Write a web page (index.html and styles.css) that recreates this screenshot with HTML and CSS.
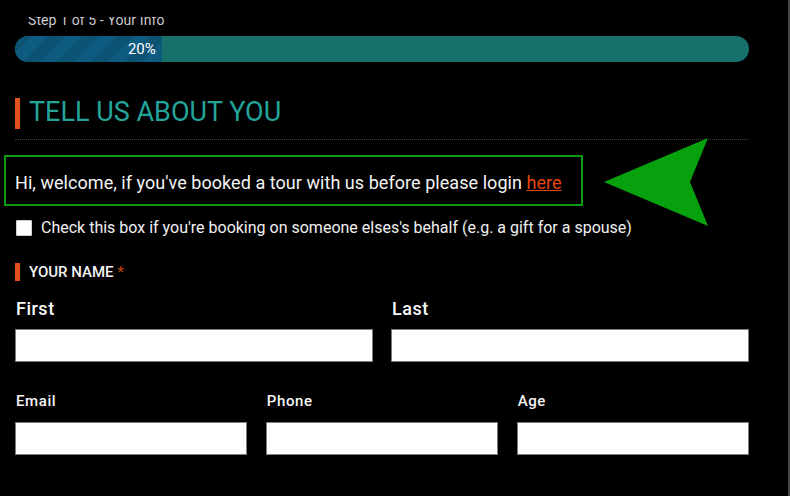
FILE: index.html
```html
<!DOCTYPE html>
<html lang="en">
<head>
<meta charset="utf-8">
<title>Your Info</title>
<link rel="stylesheet" href="styles.css">
</head>
<body>
<div class="page">
  <div class="step"><span>Step 1 of 5 - Your Info</span></div>
  <div class="progress">
    <div class="progress-fill" style="width: 20%;">20%</div>
  </div>

  <h2 class="section-title">TELL US ABOUT YOU</h2>
  <div class="divider"></div>

  <p class="welcome">Hi, welcome, if you've booked a tour with us before please login <a href="#" class="login-link">here</a></p>

  <svg class="pointer" width="112" height="96" viewBox="0 0 112 96" aria-hidden="true">
    <polygon points="4,48 108,4 90,48 108,92" fill="#07a10e"/>
  </svg>

  <label class="check-row">
    <span class="check-box"></span>
    <span class="check-text">Check this box if you're booking on someone elses's behalf (e.g. a gift for a spouse)</span>
  </label>

  <div class="field-title">YOUR NAME <span class="req">*</span></div>

  <div class="name-grid">
    <div class="field">
      <div class="big-label">First</div>
      <div class="input"></div>
    </div>
    <div class="field">
      <div class="big-label">Last</div>
      <div class="input"></div>
    </div>
  </div>

  <div class="contact-grid">
    <div class="field">
      <div class="small-label">Email</div>
      <div class="input"></div>
    </div>
    <div class="field">
      <div class="small-label">Phone</div>
      <div class="input"></div>
    </div>
    <div class="field">
      <div class="small-label">Age</div>
      <div class="input"></div>
    </div>
  </div>
</div>
</body>
</html>
```

FILE: styles.css
```css
* { box-sizing: border-box; }

html, body {
  margin: 0;
  padding: 0;
  background: #000;
}

body {
  font-family: Roboto, "Liberation Sans", Arial, sans-serif;
  color: #f2f2f2;
}

.page {
  position: relative;
  width: 790px;
  height: 496px;
  overflow: hidden;
  padding: 17px 39px 0 15px;
  border-right: 2px solid #4a4a4a;
}

.step {
  height: 12px;
  overflow: hidden;
  margin-left: 13px;
}

.step span {
  display: block;
  font-size: 14px;
  line-height: 14px;
  margin-top: -4px;
  letter-spacing: 0.1px;
  color: #c9c9c9;
}

.progress {
  margin-top: 7px;
  height: 26px;
  border-radius: 13px;
  background: #17706c;
  overflow: hidden;
}

.progress-fill {
  height: 26px;
  border-radius: 13px 2px 2px 13px;
  background-color: #0d5b80;
  background-image: repeating-linear-gradient(135deg,
    rgba(0, 0, 0, 0.10) 0 12px,
    rgba(0, 0, 0, 0) 12px 24px);
  color: #fff;
  font-size: 15px;
  line-height: 26px;
  text-align: right;
  padding-right: 6px;
}

.section-title {
  margin: 36px 0 0 0;
  height: 31px;
  border-left: 5px solid #e1511b;
  padding: 0 0 2px 9px;
  font-size: 27px;
  line-height: 29px;
  font-weight: 400;
  color: #23a59b;
  white-space: nowrap;
}

.divider {
  margin-top: 10px;
  border-top: 1px dotted #3d3d3d;
}

.welcome {
  margin: 15px 0 0 -11px;
  width: 579px;
  border: 2px solid #0b9a12;
  padding: 14px 0 9px 9px;
  font-size: 18px;
  line-height: 24px;
  letter-spacing: 0.05px;
  color: #f4f4f4;
}

.login-link {
  color: #e4450f;
  text-decoration: underline;
}

.pointer {
  position: absolute;
  left: 600px;
  top: 134px;
}

.check-row {
  display: flex;
  align-items: center;
  gap: 9px;
  margin-top: 14px;
  padding-left: 1px;
  height: 16px;
}

.check-box {
  flex: none;
  width: 16px;
  height: 16px;
  background: #fff;
  border: 1px solid #cfcfcf;
  border-radius: 1px;
}

.check-text {
  font-size: 16px;
  line-height: 16px;
  color: #f0f0f0;
}

.field-title {
  margin-top: 27px;
  height: 18px;
  border-left: 5px solid #e1511b;
  padding: 1px 0 0 9px;
  font-size: 15px;
  line-height: 17px;
  font-weight: 500;
  color: #f4f4f4;
}

.req {
  color: #b9410f;
}

.name-grid {
  display: grid;
  grid-template-columns: 1fr 1fr;
  column-gap: 18px;
  margin-top: 17px;
}

.contact-grid {
  display: grid;
  grid-template-columns: 1fr 1fr 1fr;
  column-gap: 18.5px;
  margin-top: 30px;
}

.big-label {
  font-size: 18px;
  line-height: 22px;
  font-weight: 500;
  letter-spacing: 0.5px;
  padding-left: 1px;
  color: #fafafa;
}

.small-label {
  font-size: 15px;
  line-height: 18px;
  font-weight: 500;
  letter-spacing: 0.6px;
  padding-left: 1px;
  color: #f4f4f4;
}

.name-grid .input {
  margin-top: 9px;
}

.contact-grid .input {
  margin-top: 12px;
}

.input {
  height: 33px;
  background: #fff;
  border: 1px solid #7d7d7d;
}
```
